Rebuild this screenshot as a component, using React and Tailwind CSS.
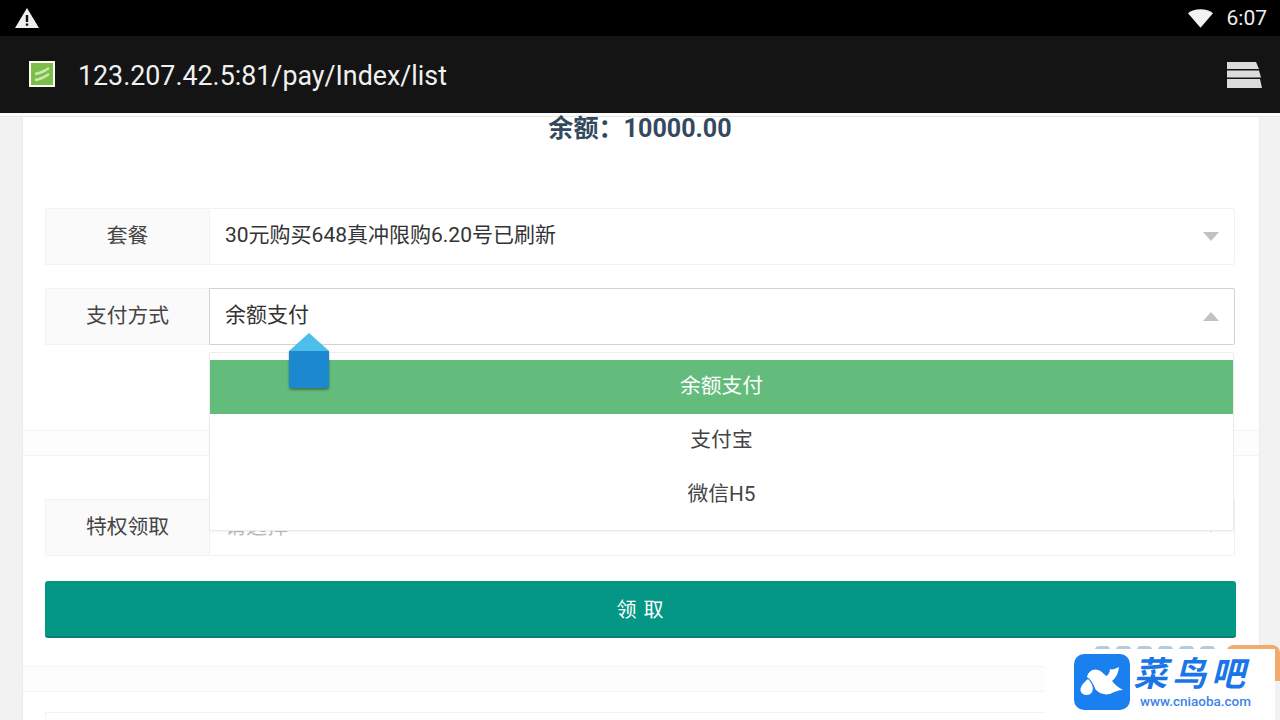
import React from "react";

const cjk = "font-['Roboto','Noto_Sans_CJK_SC',sans-serif]";

// one labelled select row of the form
const FormRow = ({ label, value, open, muted, className = "" }) => (
  <div className={`flex h-[57px] ${className}`}>
    <div className="w-[164px] shrink-0 flex items-center justify-center bg-[#fafafa] border border-r-0 border-[#f3f3f3] text-[20.8px] text-[#444]">
      {label}
    </div>
    <div
      className={`flex-1 flex items-center justify-between pl-[15px] pr-[15px] pb-[1px] bg-white border rounded-r-[2px] text-[21px] ${
        open ? "border-[#d2d2d2]" : "border-[#f1f1f1]"
      } ${muted ? "text-[#bbb]" : "text-[#333]"}`}
    >
      <span>{value}</span>
      <span
        className={`w-0 h-0 border-x-[8px] border-x-transparent ${
          open ? "border-b-[9px] border-b-[#c2c2c2]" : "border-t-[9px] border-t-[#c2c2c2]"
        }`}
      />
    </div>
  </div>
);

const Bird = () => (
  <svg viewBox="0 0 56 56" className="w-[56px] h-[56px] shrink-0">
    <rect width="56" height="56" rx="10" fill="#1a80f0" />
    {/* body and wing */}
    <path
      d="M13 23C14 18 19 14 24 16C28 17 30 21 33 22C35 20 36 17 36 15C38 16 41 15 45 13C44 20 42 24 38 27C41 31 45 34 49 36C44 36 41 38 38 39C33 42 26 40 22 36C20 33 19 27 13 23Z"
      fill="#fff"
    />
    {/* the drop it carries */}
    <path d="M14 25C18 29 20 34 18 38C16 42 9 42 7 38C5 34 9 29 14 25Z" fill="#fff" />
  </svg>
);

const App = () => {
  return (
    <div className={`relative h-[720px] overflow-hidden flex flex-col bg-[#f2f2f2] ${cjk}`}>
      {/* STATUS BAR */}
      <div className="h-9 shrink-0 bg-black flex items-center justify-between pl-[15px] pr-[13px] text-white">
        <svg viewBox="0 0 24 22" className="w-[24px] h-[22px] mb-[1px]">
          <path d="M12 1 24 21H0z" fill="#eee" />
          <path d="M10.800 8h2.400v7h-2.400zM10.800 16.400h2.400v2.400h-2.400z" fill="#111" />
        </svg>
        <div className="flex items-center gap-[14px]">
          <svg viewBox="0 0 26 19" className="w-[25px] h-[19px]">
            <path d="M13 19 0 4C3 1.600 7.500 0 13 0s10 1.600 13 4z" fill="#f2f2f2" />
          </svg>
          <span className="text-[21px] leading-none text-[#eee]">6:07</span>
        </div>
      </div>

      {/* URL BAR */}
      <div className="h-[77px] shrink-0 bg-[#141414] flex items-center justify-between pl-[29px] pr-[18px]">
        <div className="flex items-center gap-[23px]">
          <svg viewBox="0 0 26 26" className="w-[26px] h-[26px]">
            <rect width="26" height="26" fill="#fafff0" />
            <rect x="2" y="2" width="22" height="22" fill="#7dbd4c" />
            <path d="M6 13Q13 12 20 7M6 19Q13 18 20 13" stroke="#cfe8ae" strokeWidth="2.500" fill="none" />
          </svg>
          <span className="pt-[3px] text-[26.800px] leading-none text-[#f0f0f0]">123.207.42.5:81/pay/Index/list</span>
        </div>
        <svg viewBox="0 0 36 28" className="w-[36px] h-[28px]">
          <path d="M1 1h29l3 7H1z" fill="#dcdcdc" />
          <path d="M1 9.500h32l2 7H1z" fill="#dcdcdc" />
          <path d="M1 18h33l2 9H1z" fill="#dcdcdc" />
        </svg>
      </div>

      {/* thin line under the browser bar */}
      <div className="h-[4px] shrink-0 bg-[#fbfbfb] border-b border-[#e6e6e6]" />

      {/* PAGE */}
      <div className="flex-1 ml-[22px] mr-[20px] flex flex-col gap-[24px] bg-[#fdfdfd] border-x border-[#ebebeb]">
        <section className="h-[314px] shrink-0 bg-white border-b border-[#f4f4f4] pl-[22px] pr-[24px]">
          <h2 className="mt-[-3px] text-center text-[25.100px] leading-[30px] font-bold text-[#34495e]">余额：10000.00</h2>
          <FormRow className="mt-[64px]" label="套餐" value="30元购买648真冲限购6.20号已刷新" />
          <FormRow className="mt-[23px]" label="支付方式" value="余额支付" open />
        </section>

        <section className="h-[212px] shrink-0 bg-white border-y border-[#f4f4f4] pl-[22px] pr-[24px] pt-[43px]">
          <FormRow label="特权领取" value="请选择" muted />
          <button className="mt-[25px] block w-[1191px] h-[57px] pt-[2px] rounded-[3px] bg-[#049786] border-b-2 border-[#0a8074] text-white text-[20px] tracking-[0.05em]">
            领 取
          </button>
        </section>

        <section className="flex-1 bg-white border-t border-[#f4f4f4] pl-[22px] pr-[24px] pt-[20px]">
          <div className="h-[57px] border border-[#f3f3f3]" />
        </section>
      </div>

      {/* DROPDOWN */}
      <div className="absolute left-[209px] top-[352px] w-[1025px] h-[179px] pt-[7px] bg-white border border-[#ececec] rounded-[2px] shadow-xs text-[20.800px] text-[#444]">
        <div className="h-[54px] flex items-center justify-center bg-[#63bb7c] text-white">余额支付</div>
        <div className="h-[54px] flex items-center justify-center">支付宝</div>
        <div className="h-[54px] flex items-center justify-center">微信H5</div>
      </div>

      {/* TOUCH MARKER */}
      <div className="absolute left-[289px] top-[333px] w-[40px] h-[56px] drop-shadow-[0_2px_1px_rgba(0,0,0,0.35)]">
        <svg viewBox="0 0 40 56" className="w-full h-full">
          <path d="M20 0 40 18H0z" fill="#4dbde9" />
          <path d="M0 18h40v34a3 3 0 0 1-3 3H3a3 3 0 0 1-3-3z" fill="#1c88cf" />
        </svg>
      </div>

      {/* PEEKING CONTENT BEHIND WATERMARK */}
      <div className="absolute left-[1095px] top-[646px] flex gap-[6px]">
        <div className="w-[15px] h-[4px] rounded-t-full bg-[#b4cbdc]" />
        <div className="w-[15px] h-[4px] rounded-t-full bg-[#b4cbdc]" />
        <div className="w-[15px] h-[4px] rounded-t-full bg-[#b4cbdc]" />
        <div className="w-[15px] h-[4px] rounded-t-full bg-[#b4cbdc]" />
        <div className="w-[15px] h-[4px] rounded-t-full bg-[#b4cbdc]" />
        <div className="w-[15px] h-[4px] rounded-t-full bg-[#b4cbdc]" />
      </div>
      <div className="absolute left-[1226px] top-[645px] w-[54px] h-[36px] bg-[#f2ab6d] rounded-t-[8px]" />

      {/* WATERMARK */}
      <div className="absolute left-[1045px] top-[649px] w-[230px] h-[71px] bg-white flex items-start pt-[5px] pl-[29px] gap-[2px]">
        <Bird />
        <div className="flex flex-col items-center">
          <span className="text-[34px] leading-[40px] font-bold italic text-[#1a76e8] tracking-[0.14em]">菜鸟吧</span>
          <span className="ml-[8px] text-[13.500px] leading-[14px] font-medium text-[#3d83ea]">www.cniaoba.com</span>
        </div>
      </div>
    </div>
  );
};

export default App;
